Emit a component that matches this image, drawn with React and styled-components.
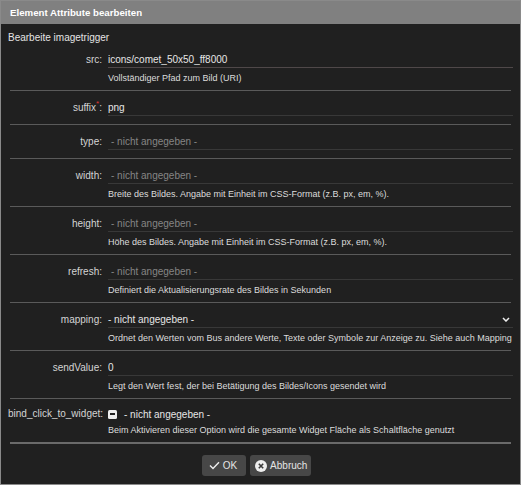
import React from "react";
import styled, { createGlobalStyle } from "styled-components";

const Global = createGlobalStyle`
  html, body { margin: 0; padding: 0; background: #202020; }
  body { font-family: "Liberation Sans", Arial, sans-serif; }
  * { box-sizing: border-box; }
`;

const Dialog = styled.div`
  width: 521px;
  height: 485px;
  border: 1px solid #8a8a8a;
  background: #202020;
  display: flex;
  flex-direction: column;
  color: #dedede;
  font-size: 10px;
`;

const TitleBar = styled.div`
  height: 23px;
  line-height: 23px;
  padding-left: 9px;
  background: #808080;
  color: #ffffff;
  font-weight: bold;
  font-size: 9.7px;
`;

const Body = styled.div`
  padding: 7px 7px 0 7px;
  display: flex;
  flex-direction: column;
`;

const Heading = styled.div`
  line-height: 14px;
  margin-bottom: -2px;
  color: #e4e4e4;
`;

const Row = styled.div`
  display: grid;
  grid-template-columns: 94px 1fr;
  column-gap: 6px;
  padding-top: 8px;
  padding-bottom: ${(p) => (p.$hasDesc ? "5px" : "8px")};
`;

const Label = styled.div`
  text-align: right;
  white-space: nowrap;
  line-height: ${(p) => (p.$short ? "14px" : "17px")};
  color: #d4d4d4;
`;

const Required = styled.span`
  color: #e0342f;
  font-size: 8px;
  vertical-align: top;
  line-height: 10px;
`;

const Field = styled.div`
  display: flex;
  flex-direction: column;
  min-width: 0;
`;

const TextInput = styled.input`
  width: 100%;
  height: 17px;
  padding: 0 0 0 ${(p) => (p.$empty ? "3px" : "0")};
  margin: 0;
  border: none;
  border-bottom: 1px solid ${(p) => (p.$focus ? "#4f4849" : "#383838")};
  background: transparent;
  color: #e6e6e6;
  font: inherit;
  font-size: 10px;
  outline: none;
  &::placeholder { color: #858585; }
`;

const SelectBox = styled.div`
  height: 17px;
  display: flex;
  align-items: center;
  justify-content: space-between;
  padding-right: 3px;
  border-bottom: 1px solid #383838;
  color: #e6e6e6;
`;

const Description = styled.div`
  margin-top: ${(p) => (p.$tight ? "2px" : "3px")};
  line-height: 14px;
  font-size: 9px;
  color: #dcdcdc;
  white-space: nowrap;
`;

const CheckRow = styled.div`
  height: 14px;
  display: flex;
  align-items: center;
  gap: 7px;
  color: #e6e6e6;
`;

const CheckBox = styled.span`
  width: 9px;
  height: 9px;
  border-radius: 1.5px;
  background: #eeeeee;
  display: flex;
  align-items: center;
  justify-content: center;
  &::after {
    content: "";
    width: 5px;
    height: 1.5px;
    background: #222;
  }
`;

const Separator = styled.div`
  height: ${(p) => (p.$thick ? "2px" : "1px")};
  margin: 0 2px;
  background: ${(p) => (p.$thick ? "#6a6a6a" : "#5a5a5a")};
`;

const ButtonBar = styled.div`
  display: flex;
  justify-content: center;
  gap: 4px;
  padding: 11px 8px 0 0;
`;

const Button = styled.button`
  height: 21px;
  display: flex;
  align-items: center;
  gap: 3px;
  padding: 0 ${(p) => p.$pr || "8px"} 0 ${(p) => p.$pl || "7px"};
  border: none;
  border-radius: 3px;
  background: #474747;
  color: #e4e4e4;
  font: inherit;
  font-size: 10px;
  cursor: pointer;
`;

const Chevron = () => (
  <svg width="8" height="5" viewBox="0 0 8 5">
    <path d="M1 1 L4 4 L7 1" stroke="#eeeeee" strokeWidth="1.5" fill="none" />
  </svg>
);

const CheckIcon = () => (
  <svg width="11" height="9" viewBox="0 0 11 9">
    <path d="M1 4.5 L4 7.5 L10 1.2" stroke="#eeeeee" strokeWidth="1.4" fill="none" />
  </svg>
);

const CancelIcon = () => (
  <svg width="12" height="12" viewBox="0 0 12 12">
    <circle cx="6" cy="6" r="6" fill="#eeeeee" />
    <path d="M3.8 3.8 L8.2 8.2 M8.2 3.8 L3.8 8.2" stroke="#3a3a3a" strokeWidth="1.6" />
  </svg>
);

const PH = "- nicht angegeben -";

const fields = [
  { name: "src", value: "icons/comet_50x50_ff8000", focus: true, desc: "Vollständiger Pfad zum Bild (URI)" },
  { name: "suffix", value: "png", required: true },
  { name: "type" },
  { name: "width", desc: "Breite des Bildes. Angabe mit Einheit im CSS-Format (z.B. px, em, %)." },
  { name: "height", desc: "Höhe des Bildes. Angabe mit Einheit im CSS-Format (z.B. px, em, %)." },
  { name: "refresh", desc: "Definiert die Aktualisierungsrate des Bildes in Sekunden" },
  { name: "mapping", select: true, desc: "Ordnet den Werten vom Bus andere Werte, Texte oder Symbole zur Anzeige zu. Siehe auch Mapping" },
  { name: "sendValue", value: "0", desc: "Legt den Wert fest, der bei Betätigung des Bildes/Icons gesendet wird" },
];

export default function App() {
  return (
    <>
      <Global />
      <Dialog>
        <TitleBar>Element Attribute bearbeiten</TitleBar>
        <Body>
          <Heading>Bearbeite imagetrigger</Heading>
          {fields.map((f, i) => (
            <React.Fragment key={f.name}>
              {i > 0 && <Separator />}
              <Row $hasDesc={!!f.desc}>
                <Label>
                  {f.name}
                  {f.required && <Required>*</Required>}:
                </Label>
                <Field>
                  {f.select ? (
                    <SelectBox>
                      <span>{PH}</span>
                      <Chevron />
                    </SelectBox>
                  ) : (
                    <TextInput
                      defaultValue={f.value || ""}
                      placeholder={PH}
                      $empty={!f.value}
                      $focus={f.focus}
                    />
                  )}
                  {f.desc && <Description>{f.desc}</Description>}
                </Field>
              </Row>
            </React.Fragment>
          ))}
          <Separator />
          <Row $hasDesc>
            <Label $short>bind_click_to_widget:</Label>
            <Field>
              <CheckRow>
                <CheckBox />
                <span>{PH}</span>
              </CheckRow>
              <Description $tight>
                Beim Aktivieren dieser Option wird die gesamte Widget Fläche als Schaltfläche genutzt
              </Description>
            </Field>
          </Row>
          <Separator $thick />
          <ButtonBar>
            <Button $pl="7px" $pr="9px">
              <CheckIcon />
              OK
            </Button>
            <Button $pl="5px" $pr="4px">
              <CancelIcon />
              Abbruch
            </Button>
          </ButtonBar>
        </Body>
      </Dialog>
    </>
  );
}
